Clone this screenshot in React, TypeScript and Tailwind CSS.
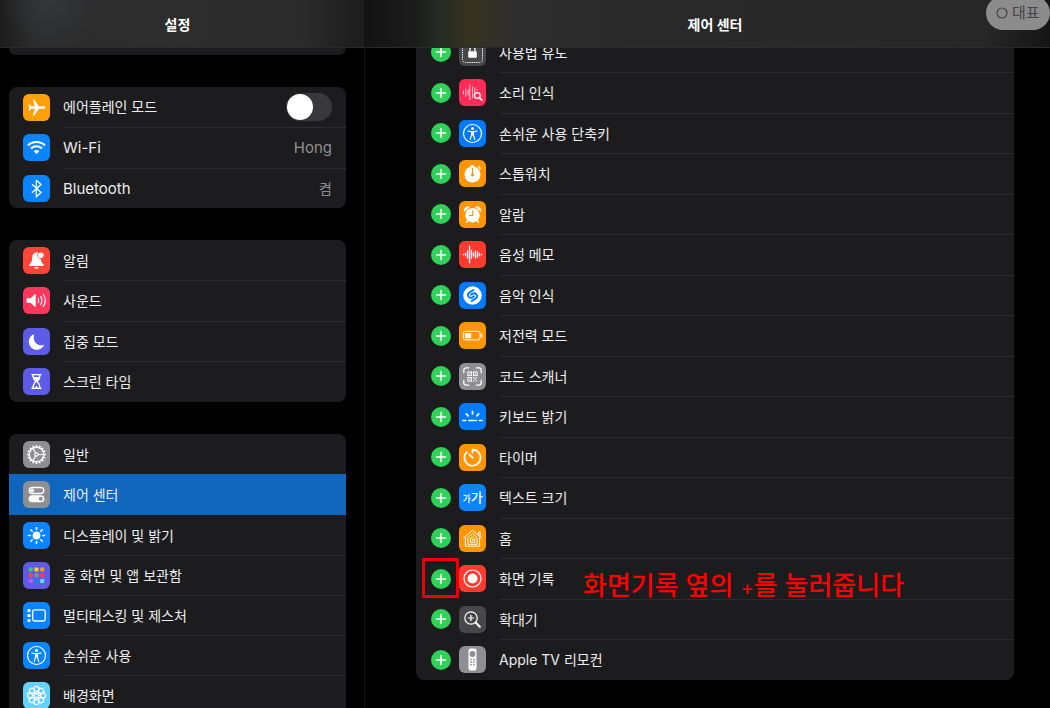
import { useState } from 'react'
import type { ReactNode } from 'react'

type Item = {
  label: string
  color: string
  icon: ReactNode
  value?: string
  latin?: boolean
}

const petals = [0, 45, 90, 135, 180, 225, 270, 315]
const teeth = [0, 22.5, 45, 67.5, 90, 112.5, 135, 157.5, 180, 202.5, 225, 247.5, 270, 292.5, 315, 337.5]

const icons = {
  airplane: (
    <path
      fill="#fff"
      d="M22.3 13.5c0-.8-1-1.3-2.2-1.3h-4.2L11.6 5.9c-.2-.3-.4-.4-.7-.4H9.8l2 6.7H8.3L6.8 10.4H5.6l.8 3.1-.8 3.1h1.2l1.5-1.8h3.5l-2 6.7h1.1c.3 0 .5-.1.7-.4l4.3-6.3h4.2c1.2 0 2.2-.5 2.2-1.3z"
    />
  ),
  wifi: (
    <g fill="none" stroke="#fff" strokeWidth="2.1">
      <path d="M5 11.4a12.2 12.2 0 0 1 17 0" />
      <path d="M8 14.5a8 8 0 0 1 11 0" />
      <path d="M10.7 17.3a4.3 4.3 0 0 1 5.6 0l-2.8 2.8z" fill="#fff" stroke="none" />
    </g>
  ),
  bluetooth: (
    <path d="m9 9.2 9 8.2-4.7 4.3V5.3L18 9.6 9 17.8" fill="none" stroke="#fff" strokeWidth="1.3" strokeLinejoin="round" />
  ),
  bell: (
    <>
      <path
        fill="#fff"
        d="M13.5 5.3c-3 .5-4.4 2.7-4.4 5.6 0 3.6-.8 4.9-2.6 6.5-.6.6-.3 1.6.5 1.6h13c.8 0 1.1-1 .5-1.6-1.5-1.4-2.4-2.6-2.6-5.5-2 0-3.6-1.6-3.6-3.6 0-1 .2-2 .9-2.8zM11.2 20h4.6c-.3 1.2-1.2 1.8-2.3 1.8s-2-.6-2.3-1.8z"
      />
      <circle cx="17.8" cy="8.2" r="2.8" fill="#fff" />
    </>
  ),
  speaker: (
    <>
      <path
        fill="#fff"
        d="M4.5 11.2h3l4.2-3.7c.5-.4 1-.2 1 .5v11c0 .7-.5.9-1 .5l-4.2-3.7h-3c-.6 0-.9-.4-.9-.9v-2.8c0-.5.3-.9.9-.9z"
      />
      <g fill="none" stroke="#fff" strokeWidth="1.1" strokeLinecap="round">
        <path d="M15.1 11.2a5 5 0 0 1 0 4.6" />
        <path d="M17.7 9.4a8 8 0 0 1 0 8.2" />
        <path d="M20.3 7.5a11 11 0 0 1 0 12" />
      </g>
    </>
  ),
  moon: <path fill="#fff" d="M11.3 6.2a8 8 0 1 0 9.9 10.6c-6.7 2.4-12.3-3.8-9.9-10.6z" />,
  hourglass: (
    <>
      <path
        d="M9 6.6h9M9 20.4h9M9.9 6.5c0 4 .8 4.9 2.9 7-2.1 2.1-2.9 3-2.9 7M17.1 6.5c0 4-.8 4.9-2.9 7 2.1 2.1 2.9 3 2.9 7"
        fill="none"
        stroke="#fff"
        strokeWidth="1.4"
        strokeLinecap="round"
      />
      <path d="M10.5 9h6l-.8 1.8-2.2 2.6-2.2-2.6zM13.5 17.8l2 2.2h-4z" fill="#fff" />
    </>
  ),
  gear: (
    <g stroke="#fff" fill="none">
      {teeth.map((deg) => (
        <path key={deg} d="M13.5 4.1V6" strokeWidth="1.6" transform={`rotate(${deg} 13.5 13.5)`} />
      ))}
      <circle cx="13.5" cy="13.5" r="7.3" strokeWidth="1.5" />
      <circle cx="13.5" cy="13.5" r="1.7" strokeWidth="1.2" />
      <path d="M15.2 13.5h5.3M12.6 12 9.9 7.4M12.6 15l-2.7 4.6" strokeWidth="1.2" />
    </g>
  ),
  switches: (
    <>
      <rect x="6.2" y="6.5" width="14.6" height="6" rx="3" fill="none" stroke="#fff" strokeWidth="1.3" />
      <circle cx="9.2" cy="9.5" r="2" fill="#fff" />
      <rect x="5.6" y="14.2" width="15.8" height="7" rx="3.5" fill="#fff" />
      <circle cx="17.8" cy="17.7" r="2" fill="#8e8e93" />
    </>
  ),
  sun: (
    <>
      <circle cx="13.5" cy="13.5" r="3.9" fill="#fff" />
      {petals.map((deg) => (
        <path key={deg} d="M13.5 5.4v2" stroke="#fff" strokeWidth="1.5" strokeLinecap="round" transform={`rotate(${deg} 13.5 13.5)`} />
      ))}
    </>
  ),
  grid: (
    <>
      <rect x="5.8" y="5.6" width="4" height="4" rx="1" fill="#30d158" />
      <rect x="11.5" y="5.6" width="4" height="4" rx="1" fill="#ffd60a" />
      <rect x="17.2" y="5.6" width="4" height="4" rx="1" fill="#ff9f0a" />
      <rect x="5.8" y="11.3" width="4" height="4" rx="1" fill="#ff453a" />
      <rect x="11.5" y="11.3" width="4" height="4" rx="1" fill="#8e8e93" />
      <rect x="17.2" y="11.3" width="4" height="4" rx="1" fill="#ff375f" />
      <rect x="5.8" y="17" width="4" height="4" rx="1" fill="#bf5af2" />
      <rect x="11.5" y="17" width="4" height="4" rx="1" fill="#0a84ff" />
      <rect x="17.2" y="17" width="4" height="4" rx="1" fill="#64e0e6" />
    </>
  ),
  multitask: (
    <>
      <rect x="9.7" y="7.8" width="12.5" height="11.2" rx="1.8" fill="none" stroke="#fff" strokeWidth="1.3" />
      <rect x="4.5" y="7" width="3" height="3" rx=".8" fill="#fff" />
      <rect x="4.5" y="12" width="3" height="3" rx=".8" fill="#fff" />
      <rect x="4.5" y="17" width="3" height="3" rx=".8" fill="#fff" />
    </>
  ),
  person: (
    <>
      <circle cx="13.5" cy="13.5" r="9" fill="none" stroke="#fff" strokeWidth="1.2" />
      <circle cx="13.5" cy="8.4" r="1.5" fill="#fff" />
      <path
        d="M8.8 11 12.5 11.6v3.8l-1.3 4.1M18.2 11l-3.7.6v3.8l1.3 4.1"
        fill="none"
        stroke="#fff"
        strokeWidth="1.2"
        strokeLinecap="round"
        strokeLinejoin="round"
      />
      <path d="M12 11.2h3v4.3h-3z" fill="#fff" />
    </>
  ),
  flower: (
    <g fill="none" stroke="#fff" strokeWidth="1.2">
      {petals.map((deg) => (
        <circle key={deg} cx="13.5" cy="7" r="2.6" transform={`rotate(${deg} 13.5 13.5)`} />
      ))}
      <circle cx="13.5" cy="13.5" r="2.2" />
      {petals.map((deg) => (
        <path key={deg} d="M13.5 9.6v1.7" transform={`rotate(${deg} 13.5 13.5)`} />
      ))}
    </g>
  ),
  lock: (
    <>
      <rect x="3.5" y="3.5" width="20" height="20" rx="3" fill="none" stroke="#fff" strokeWidth="1" strokeDasharray="1.3 1" />
      <rect x="9.2" y="12.2" width="8.6" height="6.6" rx="1" fill="#fff" />
      <path d="M11 12.5v-2a2.5 2.5 0 0 1 5 0v2" fill="none" stroke="#fff" strokeWidth="1.3" />
    </>
  ),
  soundSearch: (
    <g fill="none" stroke="#fff" strokeLinecap="round">
      <path d="M4.5 12v3M6.8 9.8v7.5M9.1 11v5M10.8 5.5v15M13.6 8v11" strokeWidth="1" opacity=".75" />
      <path d="M15.8 9v4M18.3 10.5v1" strokeWidth="1" opacity=".75" />
      <circle cx="18.3" cy="16.5" r="2.9" strokeWidth="1.4" />
      <path d="m20.5 18.8 2.4 2.4" strokeWidth="1.6" />
    </g>
  ),
  stopwatch: (
    <>
      <circle cx="13.5" cy="14.5" r="8" fill="#fff" />
      <path d="M11.8 5h3.4v2.5h-3.4z" fill="#fff" />
      <path d="m19.4 6.8 1.6 1.6" stroke="#fff" strokeWidth="1.5" strokeLinecap="round" />
      <path d="M13.5 8.2v7" stroke="#ff9500" strokeWidth="1.1" strokeLinecap="round" />
      <circle cx="13.5" cy="14.8" r="1.6" fill="#ff9500" />
    </>
  ),
  alarm: (
    <>
      <circle cx="13.5" cy="14.2" r="7.3" fill="#fff" />
      <path d="M5.5 10.5c-1.2-3 1.8-5.7 4.9-4.4zM21.5 10.5c1.2-3-1.8-5.7-4.9-4.4z" fill="#fff" stroke="#fff" strokeWidth=".6" />
      <path d="m9 19.5-1.5 1.8M18 19.5l1.5 1.8" stroke="#fff" strokeWidth="1.4" strokeLinecap="round" />
      <path d="M13.7 9.6v4.9h-3.4" fill="none" stroke="#ff9500" strokeWidth="1.1" strokeLinecap="round" />
    </>
  ),
  voice: (
    <path
      d="M4.5 13.3v.4M6.5 12.3v2.4M8.5 10v7M10.5 5.2v16.6M12.5 9.5v8M14.5 12v3M16.5 10v7M18.5 10.8v5.4M20.5 12.3v2.4M22.5 13.3v.4"
      stroke="#fff"
      strokeWidth="1.3"
      strokeLinecap="round"
    />
  ),
  shazam: (
    <>
      <circle cx="13.5" cy="13.5" r="9.3" fill="#fff" />
      <g fill="none" stroke="#007aff" strokeWidth="1.9" strokeLinecap="round">
        <path d="m14.3 8-4 2.6c-1.7 1.1-1.9 3-.6 4.3 1.3 1.2 2.7 1.1 4 .2l1.3-.9" />
        <path d="m12.7 19 4-2.6c1.7-1.1 1.9-3 .6-4.3-1.3-1.2-2.7-1.1-4-.2l-1.3.9" />
      </g>
    </>
  ),
  battery: (
    <>
      <rect x="4.4" y="9.3" width="16.7" height="8.6" rx="2.3" fill="none" stroke="#fff" strokeWidth="1" />
      <rect x="6" y="10.9" width="6.2" height="5.4" rx=".8" fill="#fff" />
      <path d="M22.8 12.2v2.8" stroke="#fff" strokeWidth="1.2" strokeLinecap="round" />
    </>
  ),
  qr: (
    <g fill="none" stroke="#fff">
      <path
        d="M4.8 9.7V7.2a2.4 2.4 0 0 1 2.4-2.4h2.5M17.3 4.8h2.5a2.4 2.4 0 0 1 2.4 2.4v2.5M22.2 17.3v2.5a2.4 2.4 0 0 1-2.4 2.4h-2.5M9.7 22.2H7.2a2.4 2.4 0 0 1-2.4-2.4v-2.5"
        strokeWidth="1.3"
        strokeLinecap="round"
      />
      <rect x="8.9" y="8.9" width="3.6" height="3.6" />
      <rect x="14.5" y="8.9" width="3.6" height="3.6" />
      <rect x="8.9" y="14.5" width="3.6" height="3.6" />
      <path
        d="M10.2 10.7h1M15.8 10.7h1M10.2 16.3h1M14 14.7h1.4M16.6 14.7H18M15.2 16.3h1.6M14 18h1.4M16.9 18h1.3"
        strokeWidth="1.2"
      />
    </g>
  ),
  keyboard: (
    <path
      d="M4 17.5h2.6M9.7 17.5h7.6M20.4 17.5H23M13.5 8.3v2.6M7.3 10.9l1.8 1.9M19.7 10.9l-1.8 1.9"
      stroke="#fff"
      strokeWidth="1.7"
      strokeLinecap="round"
    />
  ),
  timer: (
    <g fill="none" stroke="#fff" strokeLinecap="round">
      <path d="M13.5 8.7v-3a8 8 0 1 1-5.7 2.4" strokeWidth="1.7" />
      <path d="m10.3 10.3 3.5 3.5" strokeWidth="1.9" />
    </g>
  ),
  home: (
    <g fill="none" stroke="#fff" strokeWidth="1" strokeLinejoin="round" strokeLinecap="round">
      <path d="m4.5 13 9-7.7 9 7.7" />
      <path d="M19.6 10V7h1.6v4.5" />
      <path d="M6.4 12.5v8.7h14.2v-8.7" />
      <path d="M8.9 18.9v-6.3l4.6-4 4.6 4v6.3z" />
      <path d="M11.3 16.9v-3.2l2.2-1.9 2.2 1.9v3.2z" />
      <circle cx="13.5" cy="14.8" r=".5" />
    </g>
  ),
  record: (
    <>
      <circle cx="13.5" cy="13.5" r="8.5" fill="none" stroke="#fff" strokeWidth="1.2" />
      <circle cx="13.5" cy="13.5" r="5" fill="#fff" />
    </>
  ),
  magnifier: (
    <g fill="none" stroke="#fff" strokeLinecap="round">
      <circle cx="12" cy="12" r="6.2" strokeWidth="1.2" />
      <path d="M9.4 12h5.2M12 9.4v5.2" strokeWidth="1.2" />
      <path d="m16.8 16.8 4 4" strokeWidth="2.1" />
    </g>
  ),
  remote: (
    <>
      <rect x="9.5" y="2.5" width="8" height="22" rx="2" fill="#fff" />
      <circle cx="13.5" cy="8" r="2.9" fill="#8e8e93" />
      <g fill="#8e8e93">
        <circle cx="12" cy="13.3" r=".9" />
        <circle cx="15" cy="13.3" r=".9" />
        <circle cx="12" cy="16" r=".9" />
        <circle cx="15" cy="16" r=".9" />
        <circle cx="12" cy="18.7" r=".9" />
        <circle cx="15" cy="18.7" r=".9" />
      </g>
    </>
  ),
}

const network: Item[] = [
  { label: 'Wi-Fi', color: 'bg-[#0a84ff]', icon: icons.wifi, value: 'Hong', latin: true },
  { label: 'Bluetooth', color: 'bg-[#0a84ff]', icon: icons.bluetooth, value: '켬', latin: true },
]

const alerts: Item[] = [
  { label: '알림', color: 'bg-[#ff453a]', icon: icons.bell },
  { label: '사운드', color: 'bg-[#ff375f]', icon: icons.speaker },
  { label: '집중 모드', color: 'bg-[#5e5ce6]', icon: icons.moon },
  { label: '스크린 타임', color: 'bg-[#5e5ce6]', icon: icons.hourglass },
]

const general: Item[] = [
  { label: '일반', color: 'bg-[#8e8e93]', icon: icons.gear },
  { label: '제어 센터', color: 'bg-[#8e8e93]', icon: icons.switches },
  { label: '디스플레이 및 밝기', color: 'bg-[#0a84ff]', icon: icons.sun },
  { label: '홈 화면 및 앱 보관함', color: 'bg-[#5e5ce6]', icon: icons.grid },
  { label: '멀티태스킹 및 제스처', color: 'bg-[#0a84ff]', icon: icons.multitask },
  { label: '손쉬운 사용', color: 'bg-[#0a84ff]', icon: icons.person },
  { label: '배경화면', color: 'bg-[#64d2ff]', icon: icons.flower },
]

const controls: Item[] = [
  { label: '사용법 유도', color: 'bg-[#48484a]', icon: icons.lock },
  { label: '소리 인식', color: 'bg-[#ff2d55]', icon: icons.soundSearch },
  { label: '손쉬운 사용 단축키', color: 'bg-[#007aff]', icon: icons.person },
  { label: '스톱워치', color: 'bg-[#ff9500]', icon: icons.stopwatch },
  { label: '알람', color: 'bg-[#ff9500]', icon: icons.alarm },
  { label: '음성 메모', color: 'bg-[#ff3b30]', icon: icons.voice },
  { label: '음악 인식', color: 'bg-[#007aff]', icon: icons.shazam },
  { label: '저전력 모드', color: 'bg-[#ff9500]', icon: icons.battery },
  { label: '코드 스캐너', color: 'bg-[#8e8e93]', icon: icons.qr },
  { label: '키보드 밝기', color: 'bg-[#007aff]', icon: icons.keyboard },
  { label: '타이머', color: 'bg-[#ff9500]', icon: icons.timer },
  { label: '텍스트 크기', color: 'bg-[#0a84ff]', icon: null },
  { label: '홈', color: 'bg-[#ff9500]', icon: icons.home },
  { label: '화면 기록', color: 'bg-[#ff3b30]', icon: icons.record },
  { label: '확대기', color: 'bg-[#48484a]', icon: icons.magnifier },
  { label: 'Apple TV 리모컨', color: 'bg-[#8e8e93]', icon: icons.remote },
]

function Tile({ color, icon }: { color: string; icon: ReactNode }) {
  return (
    <span className={`flex size-[27px] shrink-0 items-center justify-center rounded-md ${color}`}>
      {icon ? (
        <svg viewBox="0 0 27 27" className="size-full" aria-hidden="true">
          {icon}
        </svg>
      ) : (
        <span className="flex items-baseline leading-none font-medium text-white" aria-hidden="true">
          <span className="text-[9px]">가</span>
          <span className="text-[13px]">가</span>
        </span>
      )}
    </span>
  )
}

function MenuRow({ item, active, onSelect, line }: { item: Item; active: boolean; onSelect: () => void; line: boolean }) {
  return (
    <li className="h-10 nth-2:h-[41px]">
      <button
        type="button"
        onClick={onSelect}
        className={`flex h-full w-full items-center gap-[13px] pl-3.5 text-left ${active ? 'bg-[#1065bd]' : ''}`}
      >
        <Tile color={item.color} icon={item.icon} />
        <span
          className={`flex h-full flex-1 items-center justify-between border-t pr-3.5 ${line ? 'border-[#2c2c2e]' : 'border-transparent'}`}
        >
          <span className={item.latin ? 'text-[15px]' : ''}>{item.label}</span>
          {item.value && <span className={`text-[#8e8e93] ${item.value === 'Hong' ? 'text-[15px]' : ''}`}>{item.value}</span>}
        </span>
      </button>
    </li>
  )
}

export default function App() {
  const [airplane, setAirplane] = useState(false)
  const [selected, setSelected] = useState('제어 센터')

  const renderMenu = (items: Item[], lineOnFirst = false) =>
    items.map((item, i) => (
      <MenuRow
        key={item.label}
        item={item}
        active={item.label === selected}
        onSelect={() => setSelected(item.label)}
        line={(i > 0 || lineOnFirst) && item.label !== selected && items[i - 1]?.label !== selected}
      />
    ))

  return (
    <div className="relative flex h-screen overflow-hidden bg-black font-['Inter','Noto_Sans_CJK_KR',sans-serif] text-sm text-[#ececee]">
      {/* Menu lateral */}
      <aside className="flex w-[365px] shrink-0 flex-col overflow-hidden border-r border-[#161617]">
        <header className="flex h-12 shrink-0 items-center justify-center border-b border-[#2b2b2c] bg-[radial-gradient(circle_at_50px_0px,#34363a,transparent_50px),linear-gradient(to_right,#1d1d1d,#2c2c2c_36px,#2d2d2d_50%,#2a2a2a_84%,#1c1c1c)] pt-0.5 pr-[18px] pl-[9px]">
          <h1 className="font-bold text-white">설정</h1>
        </header>
        <nav className="flex flex-col gap-8 pr-[18px] pl-[9px]">
          <div className="h-[7px] shrink-0 rounded-b-lg bg-[#1c1c1e]" />

          <ul className="overflow-hidden rounded-lg bg-[#1c1c1e]">
            <li className="flex h-10 items-center gap-[13px] px-3.5">
              <Tile color="bg-[#ff9f0a]" icon={icons.airplane} />
              <label htmlFor="airplane" className="flex-1">
                에어플레인 모드
              </label>
              <input
                id="airplane"
                type="checkbox"
                role="switch"
                checked={airplane}
                onChange={(e) => setAirplane(e.target.checked)}
                className="h-7 w-[46px] appearance-none rounded-full bg-[#39393d] p-px before:block before:size-[26px] before:rounded-full before:bg-white checked:bg-[#30d158] checked:before:ml-[18px]"
              />
            </li>
            {renderMenu(network, true)}
          </ul>

          <ul className="overflow-hidden rounded-lg bg-[#1c1c1e] pb-px">{renderMenu(alerts)}</ul>

          <ul className="overflow-hidden rounded-lg bg-[#1c1c1e]">{renderMenu(general)}</ul>
        </nav>
      </aside>

      {/* Lista de controles */}
      <main className="flex min-w-0 flex-1 flex-col overflow-hidden">
        <header className="flex h-12 shrink-0 items-center justify-center border-b border-[#2b2b2c] bg-[linear-gradient(to_right,#131313,#1b1c1b_50px,#272b24_74px,#36331f_106px,#2e2e2e_150px,#292929_260px,#282828_90%,#151515)] pt-0.5 pr-9 pl-[51px]">
          <h2 className="font-bold text-white">제어 센터</h2>
        </header>
        <div className="min-h-0 flex-1 overflow-hidden pr-9 pl-[51px]">
          <ul className="-mt-4 rounded-lg bg-[#1c1c1e]">
            {controls.map((item, i) => (
              <li key={item.label} className="relative flex items-center pl-[15px] odd:h-10 even:h-[41px]">
                <button
                  type="button"
                  aria-label={`${item.label} 추가`}
                  className="mr-2 flex size-5 shrink-0 items-center justify-center rounded-full bg-[#30d158]"
                >
                  <svg viewBox="0 0 20 20" className="size-5" aria-hidden="true">
                    <path d="M10 5.5v9M5.5 10h9" stroke="#fff" strokeWidth="1.5" strokeLinecap="round" />
                  </svg>
                </button>
                <Tile color={item.color} icon={item.icon} />
                <span className={`ml-[13px] flex h-full flex-1 items-center border-t ${i > 0 ? 'border-[#2c2c2e]' : 'border-transparent'}`}>
                  {item.label}
                </span>
                {item.label === '화면 기록' && (
                  <>
                    <span className="absolute top-0 left-1.5 h-10 w-[37px] border-[3px] border-[#f00000]" />
                    <span className="absolute top-2.5 left-[167px] text-[26px] leading-9 font-medium whitespace-nowrap text-[#ff0000]">
                      화면기록 옆의 <span className="text-xl font-normal">+</span>를 눌러줍니다
                    </span>
                  </>
                )}
              </li>
            ))}
          </ul>
        </div>
      </main>

      <div className="absolute -top-1 right-0 flex h-[34px] w-16 items-center gap-1 rounded-full bg-[#8c8c8c] pl-2.5 text-[15px] text-[#444]">
        <svg viewBox="0 0 12 12" className="size-3" aria-hidden="true">
          <circle cx="6" cy="6" r="5" fill="none" stroke="#444" strokeWidth="1.2" />
        </svg>
        <span>대표</span>
      </div>
    </div>
  )
}
